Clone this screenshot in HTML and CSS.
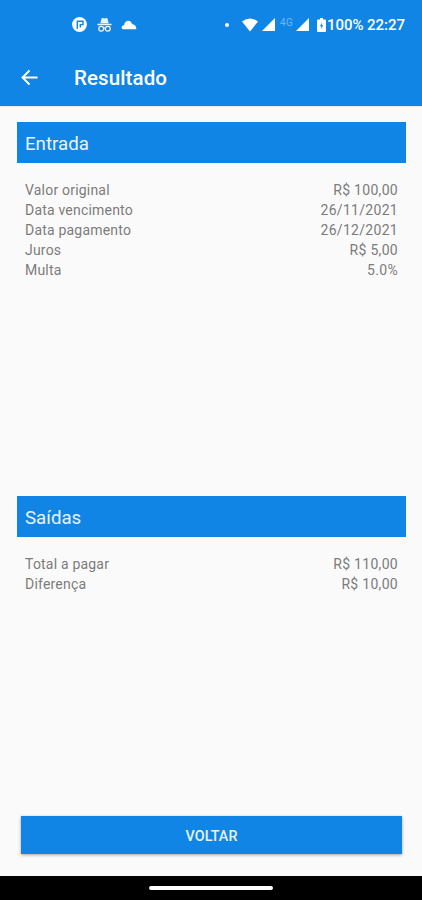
FILE: index.html
```html
<!DOCTYPE html>
<html lang="pt-BR">
<head>
<meta charset="utf-8">
<title>Resultado</title>
<link rel="stylesheet" href="styles.css">
</head>
<body>
<div class="screen">
  <header class="top">
    <div class="status">
      <div class="status-left">
        <svg width="16" height="16" viewBox="0 0 16 16"><circle cx="7.500" cy="7.500" r="7.400" fill="#fff"/><path d="M5.300 12V4.300H11V7.600H8.300V10.500" fill="none" stroke="#1185e6" stroke-width="1.400"/></svg>
        <svg width="15" height="16" viewBox="0 0 16 16"><path d="M3.500 6.200l1.300-5Q5.100.3 6.100.5L8 1 9.900.5q1-.2 1.300.7l1.300 5zM.5 6.700h15v1.500H.5z" fill="#e8f4ff"/><g fill="none" stroke="#e8f4ff" stroke-width="1.300"><circle cx="4.500" cy="12" r="2.600"/><circle cx="11.500" cy="12" r="2.600"/><path d="M7.100 11.500q.9-.7 1.800 0"/></g></svg>
        <svg width="16" height="16" viewBox="0 0 16 16"><path d="M2.800 12.300C-.2 12.300 0 8.500 3 8.200C3.800 3 9.500 1.800 11.300 7.300C13.500 7.500 15.500 9 15.300 12.300z" fill="#fff"/></svg>
      </div>
      <div class="status-right">
        <span class="dot"></span>
        <svg class="wifi" width="16" height="14" viewBox="0 0 16 14"><path d="M0 3.600Q8-2.600 16 3.600L8 13.500z" fill="#fff"/></svg>
        <svg class="signal" width="13" height="13" viewBox="0 0 13 13"><path d="M13 0v13H0z" fill="#fff"/></svg>
        <span class="network">4G</span>
        <svg class="signal" width="13" height="13" viewBox="0 0 13 13"><path d="M13 0v13H0z" fill="#fff"/></svg>
        <svg class="battery" width="9" height="14" viewBox="0 0 9 14"><path d="M3 0h3v1.500h2q1 0 1 1V13q0 1-1 1H1q-1 0-1-1V2.500q0-1 1-1h2z" fill="#fff"/><path d="M4.800 4.500L3 8.200h1.300V11l1.900-3.700H4.800z" fill="#1185e6"/></svg>
        <span class="percent">100%</span>
        <span class="clock">22:27</span>
      </div>
    </div>
    <div class="appbar">
      <svg class="back" width="17" height="17" viewBox="0 0 17 17"><path d="M16.500 8.500H2M8.500 1.500l-7 7 7 7" fill="none" stroke="#fff" stroke-width="1.900"/></svg>
      <h1>Resultado</h1>
    </div>
  </header>
  <main>
    <section class="inputs">
      <h2>Entrada</h2>
      <dl>
        <div><dt>Valor original</dt><dd>R$ 100,00</dd></div>
        <div><dt>Data vencimento</dt><dd>26/11/2021</dd></div>
        <div><dt>Data pagamento</dt><dd>26/12/2021</dd></div>
        <div><dt>Juros</dt><dd>R$ 5,00</dd></div>
        <div><dt>Multa</dt><dd>5.0%</dd></div>
      </dl>
    </section>
    <section class="outputs">
      <h2>Saídas</h2>
      <dl>
        <div><dt>Total a pagar</dt><dd>R$ 110,00</dd></div>
        <div><dt>Diferença</dt><dd>R$ 10,00</dd></div>
      </dl>
    </section>
    <button type="button">VOLTAR</button>
  </main>
  <footer><span class="handle"></span></footer>
</div>
</body>
</html>
```
FILE: styles.css
```css
* { box-sizing: border-box; }
body { margin: 0; font-family: Roboto, sans-serif; }
h1, h2, dl, dd { margin: 0; }
svg { display: block; flex: none; }
.screen { width: 422px; height: 900px; display: flex; flex-direction: column; background: #fafafa; }
.top { height: 105.5px; flex: none; background: #1185e6; color: #fff; box-shadow: 0 1px 1px rgba(0, 0, 0, .06); }
.status { height: 49px; display: flex; justify-content: space-between; align-items: center; padding: 0 17px 0 72px; }
.status-left { display: flex; gap: 9px; }
.status-right { display: flex; align-items: center; font-size: 15px; font-weight: 500; }
.dot { width: 4px; height: 4px; border-radius: 50%; background: #fff; margin-right: 13px; }
.wifi { margin-right: 4px; }
.network { width: 21px; padding-left: 5px; font-size: 10px; line-height: 12px; font-weight: 400; letter-spacing: .4px; color: #71b8f3; margin-top: -4px; }
.battery { margin: 0 1px 0 8px; }
.percent { width: 36px; margin-right: 4px; }
.clock { width: 38px; }
.percent, .clock { white-space: nowrap; }
.appbar { height: 57px; display: flex; align-items: center; padding-left: 21px; }
.appbar h1 { margin-left: 36px; padding-top: 1px; font-size: 20.5px; line-height: 24px; font-weight: 500; letter-spacing: .1px; }
main { flex: 1; display: flex; flex-direction: column; padding: 16.5px 16px 22.5px 17px; }
.inputs { height: 374px; }
h2 { height: 41px; padding: 2px 8px 0; background: #1185e6; color: #e8f4ff; font-size: 18.7px; line-height: 41px; font-weight: 400; }
dl { padding: 17px 8px 0; color: #7c7c7c; font-size: 14px; line-height: 20px; letter-spacing: .2px; }
dd { letter-spacing: .3px; }
dl div { display: flex; justify-content: space-between; }
button { margin: auto 4px 0; height: 37.5px; border: 0; padding: 1px 0 0; background: #1185e6; color: #e8f4ff; font: 500 14.3px/38px Roboto, sans-serif; letter-spacing: .1px; box-shadow: 0 1px 3px rgba(0, 0, 0, .35); }
footer { height: 24px; flex: none; display: flex; justify-content: center; align-items: center; background: #000; }
.handle { width: 124px; height: 4px; border-radius: 2px; background: #fff; }
```
